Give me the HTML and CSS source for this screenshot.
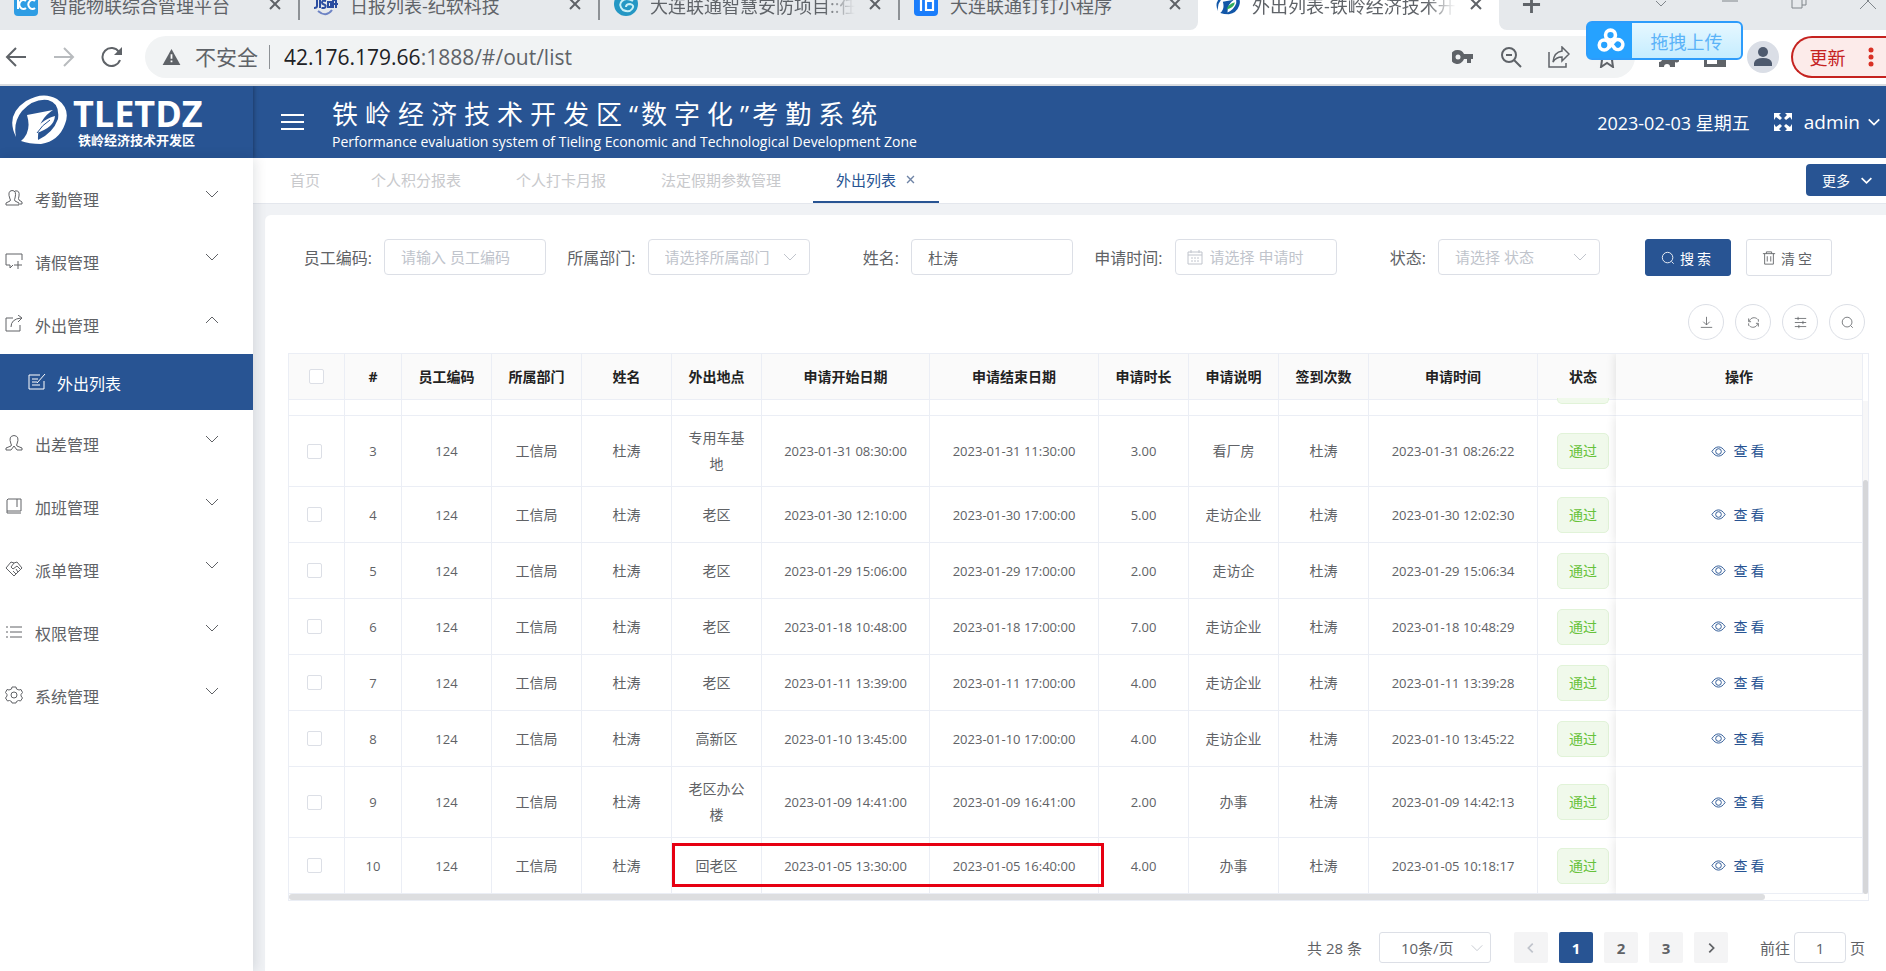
FILE: index.html
```html
<!DOCTYPE html>
<html lang="zh-CN">
<head>
<meta charset="utf-8">
<title>外出列表-铁岭经济技术开发区</title>
<link rel="stylesheet" href="styles.css">
</head>
<body>
<svg class="sprite" aria-hidden="true">
  <symbol id="down" viewBox="0 0 16 16"><path d="M2 5l6 6 6-6"/></symbol>
  <symbol id="up" viewBox="0 0 16 16"><path d="M2 11l6-6 6 6"/></symbol>
  <symbol id="left" viewBox="0 0 16 16"><path d="M10 3L5 8l5 5"/></symbol>
  <symbol id="right" viewBox="0 0 16 16"><path d="M6 3l5 5-5 5"/></symbol>
  <symbol id="close" viewBox="0 0 16 16"><path d="M3 3l10 10M13 3L3 13"/></symbol>
  <symbol id="eye" viewBox="0 0 16 16"><path d="M1 8c4-6.500 10-6.500 14 0c-4 6.500-10 6.500-14 0z"/><circle cx="8" cy="8" r="3"/></symbol>
  <symbol id="search" viewBox="0 0 16 16"><circle cx="7.500" cy="7.500" r="6"/><path d="M12 12l2.500 2.500"/></symbol>
</svg>

<div class="browser">
  <div class="tabstrip">
    <div class="tab-group">
      <div class="btab">
        <svg class="fav" viewBox="0 0 24 24"><rect width="24" height="24" rx="4" fill="#2e9de4"/><path d="M4 8v9M12 9a4 4.500 0 1 0 0 7M21 9a4 4.500 0 1 0 0 7" fill="none" stroke="#fff" stroke-width="2"/></svg>
        <span class="btitle">智能物联综合管理平台</span>
        <button class="bclose" aria-label="关闭"><svg viewBox="0 0 16 16"><use href="#close"/></svg></button>
      </div>
      <div class="btab">
        <svg class="fav" viewBox="0 0 24 24"><g stroke="#2b4da0" stroke-width="2"><path d="M3 8v6q0 2-3 2M6 8v8M12 9q-4-1-4 1.500q0 1.500 2 2t1.500 2q0 2-4 1.500M14 10h3v5h-3zM19 16V9q0-1 2-1M22 8v8M18 12h6"/><path d="M4 19q8 7 14-1" stroke="#6d83c4"/></g></svg>
        <span class="btitle">日报列表-纪软科技</span>
        <button class="bclose" aria-label="关闭"><svg viewBox="0 0 16 16"><use href="#close"/></svg></button>
      </div>
      <div class="btab">
        <svg class="fav" viewBox="0 0 24 24"><circle cx="12" cy="12" r="12" fill="#2497c4"/><path d="M3 7Q9 1 17 4" stroke="#8bd6ec" stroke-width="3" fill="none"/><path d="M19 9q-7-4-11 0t1 9q6 3 9-1t-2-5q-4 0-4 3" fill="none" stroke="#c9f0f7" stroke-width="2"/></svg>
        <span class="btitle fade">大连联通智慧安防项目::任</span>
        <button class="bclose" aria-label="关闭"><svg viewBox="0 0 16 16"><use href="#close"/></svg></button>
      </div>
      <div class="btab last">
        <svg class="fav" viewBox="0 0 24 24"><rect width="24" height="24" rx="4" fill="#1a7dfb"/><path d="M3 7h8M7 7v12M12 9h7v9h-7z" fill="none" stroke="#fff" stroke-width="2.200"/></svg>
        <span class="btitle">大连联通钉钉小程序</span>
        <button class="bclose" aria-label="关闭"><svg viewBox="0 0 16 16"><use href="#close"/></svg></button>
      </div>
    </div>
    <div class="btab current">
      <svg class="fav" viewBox="0 0 56 50"><path d="M5 42Q-6 20 15 6Q32-4 46 4Q60 14 54 29Q48 46 30 49Q18 49 10 46Q21 37 16 20L42 15Q26 25 27 45Q42 38 47 24Q49 8 37 5Q23 3 11 16Q2 27 5 42z" fill="#1257a8"/><path d="M25 38Q27 26 44 21Q43 33 25 38z" fill="#2fae5b"/></svg>
      <span class="btitle fade">外出列表-铁岭经济技术开</span>
      <button class="bclose" aria-label="关闭"><svg viewBox="0 0 16 16"><use href="#close"/></svg></button>
    </div>
    <div class="window-bar">
      <button class="newtab" aria-label="新标签页"><svg viewBox="0 0 20 20"><path d="M10 1v18M1 10h18"/></svg></button>
      <button class="win" aria-label="搜索标签页"><svg viewBox="0 0 18 18"><path d="M4 8l5 5 5-5"/></svg></button>
      <button class="win" aria-label="最小化"><svg viewBox="0 0 18 18"><path d="M1 8h16"/></svg></button>
      <button class="win" aria-label="还原"><svg viewBox="0 0 18 18"><path d="M2 4h10v11H2zM5 4V1h11v11h-4"/></svg></button>
      <button class="win" aria-label="关闭窗口"><svg viewBox="0 0 18 18"><path d="M1 0l16 16M17 0L1 16"/></svg></button>
    </div>
  </div>
  <div class="toolbar">
    <button class="nav" aria-label="后退"><svg viewBox="0 0 22 22"><path d="M21 11H2M11 2l-9 9 9 9"/></svg></button>
    <button class="nav dim" aria-label="前进"><svg viewBox="0 0 22 22"><path d="M1 11h19M11 2l9 9-9 9"/></svg></button>
    <button class="nav" aria-label="刷新"><svg viewBox="0 0 22 22"><path d="M19 14a9 9 0 1 1-1-8"/><path d="M21 1v8h-8z" fill="#5f6368" stroke="none"/></svg></button>
    <div class="omnibox">
      <svg class="warn" viewBox="0 0 20 18"><path d="M10 0l10 18H0z" fill="#5f6368"/><path d="M10 6v5M10 13v2" stroke="#fff" stroke-width="2"/></svg>
      <span class="insecure">不安全</span>
      <span class="url"><b>42.176.179.66</b>:1888/#/out/list</span>
      <span class="omni-icons">
        <svg class="key" viewBox="0 0 22 16"><path d="M6 1a7 7 0 1 0 6 9h3v4h4v-4h2V5h-9a7 7 0 0 0-6-4z" fill="#5f6368"/><circle cx="6" cy="8" r="2.500" fill="#f1f3f4"/></svg>
        <svg viewBox="0 0 22 22"><circle cx="9" cy="9" r="7"/><path d="M14 14l7 7M6 9h6"/></svg>
        <svg class="thin" viewBox="0 0 22 22"><path d="M1 6v15h17v-4M14 1l7 7-7 7v-4q-6 0-9 5q1-10 9-11z"/></svg>
        <svg viewBox="0 0 22 22"><path d="M11 2l3 6 7 1-5 5 1 7-6-4-6 4 1-7-5-5 7-1z"/></svg>
      </span>
    </div>
    <div class="extras">
      <svg viewBox="0 0 22 22"><path d="M2 6h5a3 3 0 1 1 6 0h5v5a3 3 0 1 1 0 5v5h-5a3 3 0 0 0-6 0H2v-5a3 3 0 0 0 0-6z" fill="#5f6368"/></svg>
      <svg viewBox="0 0 22 22"><path d="M0 2h22v19H0zM3 5v13h10V5z" fill="#5f6368" fill-rule="evenodd"/></svg>
      <svg class="avatar" viewBox="0 0 32 32"><circle cx="16" cy="16" r="16" fill="#dadee6"/><circle cx="16" cy="11" r="5" fill="#4e5a6e"/><path d="M7 25v-3q1-5 9-5t9 5v3z" fill="#4e5a6e"/></svg>
    </div>
    <button class="update">更新<svg viewBox="0 0 6 22"><circle cx="3" cy="4" r="2.500"/><circle cx="3" cy="11" r="2.500"/><circle cx="3" cy="18" r="2.500"/></svg></button>
  </div>
  <button class="drop-upload">
    <span class="cloud"><svg viewBox="0 0 30 30"><circle cx="15" cy="9" r="5.500"/><circle cx="8" cy="20" r="5.500"/><path d="M13 15l7 9a5.500 5.500 0 1 0-1-8l-6 7"/></svg></span>
    <span class="drop-text">拖拽上传</span>
  </button>
</div>

<header class="header">
  <div class="brand">
    <svg class="mark" viewBox="0 0 56 50"><path d="M5 42Q-6 20 15 6Q32-4 46 4Q60 14 54 29Q48 46 30 49Q18 49 10 46Q21 37 16 20L42 15Q26 25 27 45Q42 38 47 24Q49 8 37 5Q23 3 11 16Q2 27 5 42z"/><path d="M25 38Q27 26 44 21Q43 33 25 38z"/><path d="M26 38Q31 30 39 25" stroke="#285493" stroke-width="1"/></svg>
    <div class="brand-text"><strong>TLETDZ</strong><span>铁岭经济技术开发区</span></div>
  </div>
  <div class="header-main">
    <button class="burger" aria-label="折叠菜单"><svg viewBox="0 0 23 17"><path d="M0 1h23M0 8h23M0 15h23"/></svg></button>
    <div class="titles"><h1>铁岭经济技术开发区<i>“</i>数字化<i>”</i>考勤系统</h1><p>Performance evaluation system of Tieling Economic and Technological Development Zone</p></div>
    <span class="date">2023-02-03 星期五</span>
    <button class="full" aria-label="全屏"><svg viewBox="0 0 20 20"><path d="M1 1h7L6 3l3 3-2 2-4-3-2 3zM19 1v7l-2-3-4 3-2-2 3-3-2-2zM1 19v-7l2 3 4-3 2 2-3 3 2 2zM19 19h-7l2-2-3-3 2-2 4 3 2-3z"/></svg></button>
    <button class="user">admin<svg viewBox="0 0 16 16"><use href="#down"/></svg></button>
  </div>
</header>

<div class="app">
  <nav class="sidebar">
    <button class="item"><svg class="mi" viewBox="0 0 18 18"><path d="M1 16v-2l4-2q1-1 0-2q-3-8 2-8.500q5 0 3 7.500q-1 2 0 3l4 2v2zM10 2q5-1 4 5q-1 3 0 4l3 2v2h-2"/></svg>考勤管理<svg class="arrow" viewBox="0 0 16 16"><use href="#down"/></svg></button>
    <button class="item"><svg class="mi" viewBox="0 0 18 18"><path d="M17 8V2H1v11h4v3l3-3M13 9v8M9 13h8"/></svg>请假管理<svg class="arrow" viewBox="0 0 16 16"><use href="#down"/></svg></button>
    <button class="item"><svg class="mi" viewBox="0 0 18 18"><path d="M8 3H1v13h14v-6M6 12q0-8 10-9M13 0l4 3-4 4"/></svg>外出管理<svg class="arrow" viewBox="0 0 16 16"><use href="#up"/></svg></button>
    <a class="item active" href="#/out/list"><svg class="mi" viewBox="0 0 18 18"><path d="M12 2H1v14h15V8M4 6h6M4 9h5M4 12h8M9 10l8-9"/></svg>外出列表</a>
    <button class="item"><svg class="mi" viewBox="0 0 18 18"><path d="M1 16v-2l5-2q1-1 0-2q-3-8 3-8.500q6 .5 3 8.500q-1 1 0 2l5 2v2h-5l-3-4-3 4z"/></svg>出差管理<svg class="arrow" viewBox="0 0 16 16"><use href="#down"/></svg></button>
    <button class="item"><svg class="mi" viewBox="0 0 18 18"><path d="M3 2h13v12H2V3zM12 2v8M2 14v2h14"/></svg>加班管理<svg class="arrow" viewBox="0 0 16 16"><use href="#down"/></svg></button>
    <button class="item"><svg class="mi" viewBox="0 0 18 18"><path d="M9 16L1 8l5-6 3 1 3-1 5 6zM9 3L6 7l2 2 4-3 3 3M11 9l2 3M8 11l3 3"/></svg>派单管理<svg class="arrow" viewBox="0 0 16 16"><use href="#down"/></svg></button>
    <button class="item"><svg class="mi" viewBox="0 0 18 18"><path d="M5 4h12M5 9h12M5 14h12M1 4h2M1 9h2M1 14h2"/></svg>权限管理<svg class="arrow" viewBox="0 0 16 16"><use href="#down"/></svg></button>
    <button class="item"><svg class="mi" viewBox="0 0 18 18"><path d="M7 1h4l.5 2l2.500 1l2-.5l1.500 3L16 8.500v1.500l1.500 2l-2 3-2-.5l-2 1L11 17H7l-.5-1.500l-2-1l-2 .5l-2-3L2 10V8.500L.5 6.500l1.500-3l2 .5L6.500 3z"/><circle cx="9" cy="9" r="3"/></svg>系统管理<svg class="arrow" viewBox="0 0 16 16"><use href="#down"/></svg></button>
  </nav>

  <main class="main">
    <div class="tabs">
      <a href="#/home">首页</a><a href="#/score">个人积分报表</a><a href="#/clock">个人打卡月报</a><a href="#/holiday">法定假期参数管理</a><a class="on" href="#/out/list">外出列表<svg viewBox="0 0 16 16"><use href="#close"/></svg></a>
      <button class="more">更多<svg viewBox="0 0 16 16"><use href="#down"/></svg></button>
    </div>
    <section class="card">
      <form class="filters">
        <div class="field"><label for="code">员工编码:</label><input id="code" placeholder="请输入 员工编码"></div>
        <div class="field"><label for="dept">所属部门:</label><span class="pick"><select id="dept"><option>请选择所属部门</option></select><svg viewBox="0 0 16 16"><use href="#down"/></svg></span></div>
        <div class="field"><label for="name">姓名:</label><input id="name" value="杜涛"></div>
        <div class="field"><label for="time">申请时间:</label><span class="pick dated"><input id="time" placeholder="请选择 申请时"><svg viewBox="0 0 16 16"><path d="M1 3h14v12H1zM1 6h14M4 1v3M12 1v3M4 9h2M7 9h2M10 9h2M4 12h2M7 12h2M10 12h2"/></svg></span></div>
        <div class="field"><label for="state">状态:</label><span class="pick"><select id="state"><option>请选择 状态</option></select><svg viewBox="0 0 16 16"><use href="#down"/></svg></span></div>
        <div class="actions">
          <button type="button" class="btn primary"><svg viewBox="0 0 16 16"><use href="#search"/></svg>搜索</button>
          <button type="button" class="btn"><svg viewBox="0 0 16 16"><path d="M1 3h14M5 3V1h6v2M3 3v12h10V3M6 6v6M10 6v6"/></svg>清空</button>
        </div>
      </form>
      <div class="tools">
        <button aria-label="导出"><svg viewBox="0 0 16 16"><path d="M8 1v10M4 7l4 4 4-4M1 14h14"/></svg></button>
        <button aria-label="刷新"><svg viewBox="0 0 16 16"><path d="M3 6a6 6 0 0 1 10-2M13 10a6 6 0 0 1-10 2M2 3v4h3M14 13V9h-3M14 4v3M2 12V9"/></svg></button>
        <button aria-label="列设置"><svg viewBox="0 0 16 16"><path d="M1 3h14M1 8h14M1 13h14M5 1v4M11 6v4M6 11v4"/></svg></button>
        <button aria-label="搜索"><svg viewBox="0 0 16 16"><use href="#search"/></svg></button>
      </div>

      <div class="grid">
        <table>
          <colgroup><col class="c-c"><col class="c-s"><col class="c-m"><col class="c-m"><col class="c-m"><col class="c-m"><col class="c-b"><col class="c-d"><col class="c-m"><col class="c-m"><col class="c-m"><col class="c-d"><col class="c-t"><col></colgroup>
          <thead><tr><th class="all"><input type="checkbox" aria-label="全选"></th><th>#</th><th>员工编码</th><th>所属部门</th><th>姓名</th><th>外出地点</th><th>申请开始日期</th><th>申请结束日期</th><th>申请时长</th><th>申请说明</th><th>签到次数</th><th>申请时间</th><th class="st">状态</th><th class="fix">操作</th></tr></thead>
          <tbody>
            <tr class="peek"><td></td><td></td><td></td><td></td><td></td><td></td><td></td><td></td><td></td><td></td><td></td><td></td><td class="st"><span class="tag-end"></span></td><td class="fix"></td></tr>
            <tr class="tall"><td><input type="checkbox" aria-label="选择 3"></td><td class="n">3</td><td class="n">124</td><td>工信局</td><td>杜涛</td><td>专用车基地</td><td class="n">2023-01-31 08:30:00</td><td class="n">2023-01-31 11:30:00</td><td class="n">3.00</td><td>看厂房</td><td>杜涛</td><td class="n">2023-01-31 08:26:22</td><td class="st"><span class="tag">通过</span></td><td class="fix"><button class="view"><svg viewBox="0 0 16 16"><use href="#eye"/></svg>查看</button></td></tr>
            <tr><td><input type="checkbox" aria-label="选择 4"></td><td class="n">4</td><td class="n">124</td><td>工信局</td><td>杜涛</td><td>老区</td><td class="n">2023-01-30 12:10:00</td><td class="n">2023-01-30 17:00:00</td><td class="n">5.00</td><td>走访企业</td><td>杜涛</td><td class="n">2023-01-30 12:02:30</td><td class="st"><span class="tag">通过</span></td><td class="fix"><button class="view"><svg viewBox="0 0 16 16"><use href="#eye"/></svg>查看</button></td></tr>
            <tr><td><input type="checkbox" aria-label="选择 5"></td><td class="n">5</td><td class="n">124</td><td>工信局</td><td>杜涛</td><td>老区</td><td class="n">2023-01-29 15:06:00</td><td class="n">2023-01-29 17:00:00</td><td class="n">2.00</td><td>走访企</td><td>杜涛</td><td class="n">2023-01-29 15:06:34</td><td class="st"><span class="tag">通过</span></td><td class="fix"><button class="view"><svg viewBox="0 0 16 16"><use href="#eye"/></svg>查看</button></td></tr>
            <tr><td><input type="checkbox" aria-label="选择 6"></td><td class="n">6</td><td class="n">124</td><td>工信局</td><td>杜涛</td><td>老区</td><td class="n">2023-01-18 10:48:00</td><td class="n">2023-01-18 17:00:00</td><td class="n">7.00</td><td>走访企业</td><td>杜涛</td><td class="n">2023-01-18 10:48:29</td><td class="st"><span class="tag">通过</span></td><td class="fix"><button class="view"><svg viewBox="0 0 16 16"><use href="#eye"/></svg>查看</button></td></tr>
            <tr><td><input type="checkbox" aria-label="选择 7"></td><td class="n">7</td><td class="n">124</td><td>工信局</td><td>杜涛</td><td>老区</td><td class="n">2023-01-11 13:39:00</td><td class="n">2023-01-11 17:00:00</td><td class="n">4.00</td><td>走访企业</td><td>杜涛</td><td class="n">2023-01-11 13:39:28</td><td class="st"><span class="tag">通过</span></td><td class="fix"><button class="view"><svg viewBox="0 0 16 16"><use href="#eye"/></svg>查看</button></td></tr>
            <tr><td><input type="checkbox" aria-label="选择 8"></td><td class="n">8</td><td class="n">124</td><td>工信局</td><td>杜涛</td><td>高新区</td><td class="n">2023-01-10 13:45:00</td><td class="n">2023-01-10 17:00:00</td><td class="n">4.00</td><td>走访企业</td><td>杜涛</td><td class="n">2023-01-10 13:45:22</td><td class="st"><span class="tag">通过</span></td><td class="fix"><button class="view"><svg viewBox="0 0 16 16"><use href="#eye"/></svg>查看</button></td></tr>
            <tr class="tall"><td><input type="checkbox" aria-label="选择 9"></td><td class="n">9</td><td class="n">124</td><td>工信局</td><td>杜涛</td><td>老区办公楼</td><td class="n">2023-01-09 14:41:00</td><td class="n">2023-01-09 16:41:00</td><td class="n">2.00</td><td>办事</td><td>杜涛</td><td class="n">2023-01-09 14:42:13</td><td class="st"><span class="tag">通过</span></td><td class="fix"><button class="view"><svg viewBox="0 0 16 16"><use href="#eye"/></svg>查看</button></td></tr>
            <tr><td><input type="checkbox" aria-label="选择 10"></td><td class="n">10</td><td class="n">124</td><td>工信局</td><td>杜涛</td><td class="marked">回老区<span class="frame"></span></td><td class="n">2023-01-05 13:30:00</td><td class="n">2023-01-05 16:40:00</td><td class="n">4.00</td><td>办事</td><td>杜涛</td><td class="n">2023-01-05 10:18:17</td><td class="st"><span class="tag">通过</span></td><td class="fix"><button class="view"><svg viewBox="0 0 16 16"><use href="#eye"/></svg>查看</button></td></tr>
          </tbody>
        </table>
        <div class="vbar"><span></span></div>
        <div class="hbar"><span></span></div>
      </div>

      <div class="pager">
        <span>共 28 条</span>
        <span class="pick size"><select aria-label="每页条数"><option>10条/页</option></select><svg viewBox="0 0 16 16"><use href="#down"/></svg></span>
        <div class="pages">
          <button class="off" aria-label="上一页"><svg viewBox="0 0 16 16"><use href="#left"/></svg></button>
          <button class="cur">1</button><button>2</button><button>3</button>
          <button aria-label="下一页"><svg viewBox="0 0 16 16"><use href="#right"/></svg></button>
        </div>
        <label class="jump">前往<input value="1">页</label>
      </div>
    </section>
  </main>
</div>
</body>
</html>
```
FILE: styles.css
```css
* { box-sizing: border-box; }
body {
  margin: 0;
  min-height: 100vh;
  display: flex;
  flex-direction: column;
  overflow: hidden;
  font-family: "Open Sans", "Noto Sans CJK SC", sans-serif;
  font-size: 14px;
  color: #606266;
  background: #f0f2f5;
}
button { font: inherit; color: inherit; background: none; border: 0; padding: 0; display: flex; align-items: center; justify-content: center; }
input, select { font: inherit; color: inherit; }
a { color: inherit; text-decoration: none; }
svg { fill: none; stroke: currentColor; flex: none; }
.sprite { display: none; }

/* browser chrome */
.browser { position: relative; background: #fff; border-bottom: 2px solid #d9dce0; }
.tabstrip { display: flex; height: 30px; overflow: hidden; }
.tab-group { display: flex; flex: 0 1 1198px; min-width: 0; background: #e6e9ec; border-bottom-right-radius: 8px; }
.btab { flex: 1 1 0; min-width: 0; height: 46px; margin-top: -18px; padding: 0 15px 0 14px; display: flex; align-items: center; gap: 12px; color: #5f6368; font-size: 18px; position: relative; }
.tab-group .btab:not(.last) { border-right: 2px solid #8d9195; clip-path: inset(0 0 8px 0); }
.current { flex: 0 1 301px; padding-left: 18px; }
.fav { width: 24px; height: 24px; stroke: none; margin-top: -2px; }
.btitle { flex: 1; overflow: hidden; white-space: nowrap; }
.fade { -webkit-mask-image: linear-gradient(90deg, #000 85%, transparent); mask-image: linear-gradient(90deg, #000 85%, transparent); }
.bclose svg { width: 16px; height: 16px; stroke-width: 2; margin-top: -2px; }
.window-bar { flex: 1; display: flex; align-items: flex-start; background: #e6e9ec; border-bottom-left-radius: 8px; padding: 0 9px 0 23px; color: #80868b; }
.newtab { margin: -5px auto 0 0; color: #5f6368; }
.newtab svg { width: 19px; height: 19px; stroke-width: 3; }
.win { margin: -7px 0 0 51px; }
.win svg { width: 18px; height: 18px; }
.toolbar { display: flex; align-items: center; height: 54px; padding: 0 0 0 5px; color: #5f6368; }
.nav { width: 22px; margin-right: 26px; }
.nav svg { width: 22px; height: 22px; stroke-width: 2; }
.nav.dim { color: #b8bbbe; }
.nav:nth-child(3) { margin-right: 22px; }
.omnibox { flex: 1; height: 42px; border-radius: 21px; background: #f1f3f4; display: flex; align-items: center; padding: 0 17px; font-size: 21px; }
.warn { width: 19px; height: 16px; stroke: none; margin-right: 14px; }
.insecure { line-height: 24px; padding-right: 11px; border-right: 1px solid #8d9195; }
.url { flex: 1; padding-left: 14px; }
.url b { font-weight: 400; color: #202124; }
.omni-icons { display: flex; gap: 26px; }
.omni-icons svg { width: 22px; height: 22px; stroke-width: 2; }
.omni-icons .key { stroke: none; }
.omni-icons .thin { stroke-width: 1.5; }
.extras { display: flex; align-items: center; gap: 25px; margin-left: 22px; }
.extras svg { width: 22px; height: 22px; stroke: none; }
.extras .avatar { width: 32px; height: 32px; margin-left: -4px; }
.update { margin-left: 12px; width: 95px; height: 42px; border: 2px solid #c5221f; border-right: 0; border-radius: 21px 0 0 21px; background: #fcebea; color: #c5221f; font-size: 18px; gap: 22px; padding-left: 4px; }
.update svg { width: 6px; height: 22px; fill: #d93025; stroke: none; }
.drop-upload { position: absolute; right: 143px; top: 21px; width: 157px; height: 39px; border: 2px solid #2d9cfb; border-radius: 6px; background: linear-gradient(#e6f7ff, #c5edff); justify-content: flex-start; color: #5bb3f8; font-size: 18px; }
.cloud { width: 44px; height: 35px; background: #26a2ff; display: flex; align-items: center; justify-content: center; }
.cloud svg { width: 29px; height: 27px; stroke: #fff; stroke-width: 4; overflow: visible; }
.drop-text { flex: 1; text-align: center; }

/* header */
.header { display: flex; height: 72px; background: #285493; color: #fff; }
.brand { width: 253px; padding: 0 0 0 11px; display: flex; gap: 6px; align-items: center; box-shadow: 1px 0 4px rgba(0, 0, 0, .3); }
.mark { width: 56px; height: 50px; stroke: none; fill: #fff; margin-top: -4px; }
.brand-text { display: flex; flex-direction: column; }
.brand-text strong { font-size: 36px; line-height: 36px; }
.brand-text span { font-size: 13px; line-height: 16px; font-weight: 700; padding-left: 5px; }
.header-main { flex: 1; display: flex; align-items: center; padding: 0 5px 0 28px; }
.burger svg { width: 23px; height: 17px; stroke-width: 2; }
.titles { flex: 1; padding: 4px 0 0 28px; }
h1 { margin: 0; font-size: 26px; line-height: 36px; font-weight: 400; letter-spacing: 7px; white-space: nowrap; }
h1 i { font-style: normal; letter-spacing: 3px; }
.titles p { margin: 0; font-size: 14px; line-height: 20px; }
.date { font-size: 18px; }
.full { margin: 0 11px 0 23px; }
.full svg { width: 20px; height: 20px; stroke: none; fill: #fff; }
.user { font-size: 19px; gap: 7px; }
.user svg { width: 14px; height: 14px; stroke-width: 2; }

/* sidebar */
.app { flex: 1; display: flex; }
.sidebar { width: 253px; flex: none; background: #fff; padding-top: 14px; box-shadow: 2px 0 12px rgba(0, 21, 41, .12); position: relative; z-index: 1; display: flex; flex-direction: column; gap: 7px; }
.item { height: 56px; padding: 0 33px 2px 5px; display: flex; align-items: center; justify-content: flex-start; gap: 12px; font-size: 16px; }
.mi { width: 18px; height: 18px; margin-top: -2px; }
.arrow { width: 16px; height: 16px; margin: -10px 0 0 auto; }
.item:nth-child(3) { margin-bottom: -7px; }
.item.active { background: #285493; color: #fff; padding: 2px 0 0 28px; gap: 11px; }

/* page tabs */
.main { flex: 1; min-width: 0; display: flex; flex-direction: column; }
.tabs { display: flex; gap: 9px; height: 46px; background: #fff; border-bottom: 1px solid #e4e7ed; padding-left: 14px; font-size: 15px; color: #c8c9cc; }
.tabs a { padding: 0 23px; display: flex; align-items: center; gap: 9px; border-bottom: 2px solid transparent; }
.tabs a:first-child { padding-right: 19px; }
.tabs a.on { color: #285493; border-color: #285493; }
.tabs a svg { width: 11px; height: 11px; color: #6f84a6; stroke-width: 2; }
.more { margin: 6px 0 0 auto; width: 80px; height: 32px; border-radius: 4px 0 0 4px; background: #285493; color: #fff; font-size: 14px; gap: 10px; padding-left: 3px; }
.more svg { width: 13px; height: 13px; stroke-width: 2; }

/* card */
.card { flex: 1; margin: 11px 0 0 12px; padding: 24px 17px 7px 23px; background: #fff; border-radius: 6px 0 0 0; }
.filters { display: grid; grid-template-columns: repeat(6, minmax(0, 1fr)); align-items: start; }
.field { display: flex; align-items: center; }
.field label { width: 84px; text-align: right; font-size: 16px; flex: none; margin-right: 12px; white-space: nowrap; }
.field input, .pick select { height: 36px; width: 100%; min-width: 0; border: 1px solid #dcdfe6; border-radius: 4px; padding: 0 16px; font-size: 15px; background: #fff; appearance: none; outline: 0; }
.field > input, .field > .pick { width: 162px; }
.field input::placeholder, .field select { color: #c0c4cc; opacity: 1; }
.pick { position: relative; display: block; }
.pick svg { position: absolute; right: 12px; top: 10px; width: 16px; height: 16px; color: #c0c4cc; }
.dated svg { left: 12px; }
.dated input { padding: 0 10px 0 34px; }
.actions { display: flex; gap: 15px; padding-left: 39px; align-items: center; }
.btn { width: 86px; height: 37px; flex: none; border: 1px solid #dcdfe6; border-radius: 3px; gap: 5px; font-size: 14px; letter-spacing: 3px; }
.btn.primary { background: #285493; border-color: #285493; color: #fff; }
.btn svg { width: 14px; height: 14px; }
.tools { display: flex; justify-content: flex-end; gap: 11px; margin: 28px 4px 13px 0; }
.tools button { width: 36px; height: 36px; border: 1px solid #dcdfe6; border-radius: 50%; }
.tools svg { width: 13px; height: 13px; }

/* table */
.grid { display: grid; grid-template-columns: 1fr 5px; border: 1px solid #ebeef5; }
table { border-collapse: separate; border-spacing: 0; table-layout: fixed; width: 100%; position: relative; }
.c-c { width: 56px; }
.c-s { width: 57px; }
.c-m { width: 90px; }
.c-b { width: 168px; }
.c-d { width: 169px; }
.c-t { width: 78px; }
th, td { border-right: 1px solid #ebeef5; border-bottom: 1px solid #ebeef5; text-align: center; padding: 0; line-height: 26px; }
th { height: 46px; background: #fafafa; color: #222; font-weight: 700; }
td { height: 56px; padding: 0 10px; }
th, .n { padding: 0; }
.n { font-size: 13px; }
td:nth-child(6) { padding: 0 16px; }
.peek td { height: 16px; }
.tall td { height: 71px; }
td.st, th.st { padding: 0 0 0 12px; border-right: 0; }
.st .tag { display: block; margin: 0 auto; width: 52px; height: 36px; line-height: 34px; border: 1px solid #e1f3d8; border-radius: 5px; background: #f0f9eb; color: #67c23a; }
.tag-end { display: block; width: 52px; height: 6px; margin: -10px auto 0; background: #f0f9eb; border: 1px solid #e1f3d8; border-top: 0; border-radius: 0 0 5px 5px; }
.fix { background: #fff; box-shadow: 0 0 10px rgba(0, 0, 0, .12); clip-path: inset(0 0 0 -12px); }
th.fix { background: #fafafa; }
td input, th input { appearance: none; display: block; width: 15px; height: 15px; margin: 0 auto; border: 1px solid #dcdfe6; border-radius: 2px; background: #fff; }
td input { margin-left: 8px; }
.view { margin: 0 auto; color: #285493; gap: 8px; letter-spacing: 3px; }
.view svg { width: 15px; height: 15px; }
.marked { position: relative; }
.frame { position: absolute; left: 0; top: 5px; width: 432px; height: 44px; border: 3px solid #e60012; z-index: 2; }
.vbar { display: flex; align-items: flex-end; margin-top: 47px; background: #f7f7f8; }
.vbar span { width: 5px; height: 84%; border-radius: 3px; background: #d5d6d9; }
.hbar { grid-column: 1 / -1; height: 6px; }
.hbar span { display: block; width: 93.5%; height: 6px; border-radius: 3px; background: #dddee0; }

/* pagination */
.pager { display: flex; align-items: center; justify-content: flex-end; margin-top: 31px; padding-right: 4px; font-size: 15px; }
.size { margin: 0 23px 0 17px; width: 112px; }
.size select { height: 31px; padding: 0 21px; border-radius: 3px; }
.size svg { right: 7px; top: 9px; width: 14px; height: 14px; }
.pages { display: flex; gap: 11px; margin-right: 32px; }
.pages button { width: 34px; height: 31px; border-radius: 2px; background: #f4f4f5; font-weight: 700; }
.pages .cur { background: #285493; color: #fff; }
.pages .off { color: #c0c4cc; }
.pages svg { width: 14px; height: 14px; stroke-width: 2; }
.jump { display: flex; align-items: center; gap: 4px; }
.jump input { width: 52px; height: 31px; border: 1px solid #dcdfe6; border-radius: 4px; text-align: center; padding: 0; }
```
